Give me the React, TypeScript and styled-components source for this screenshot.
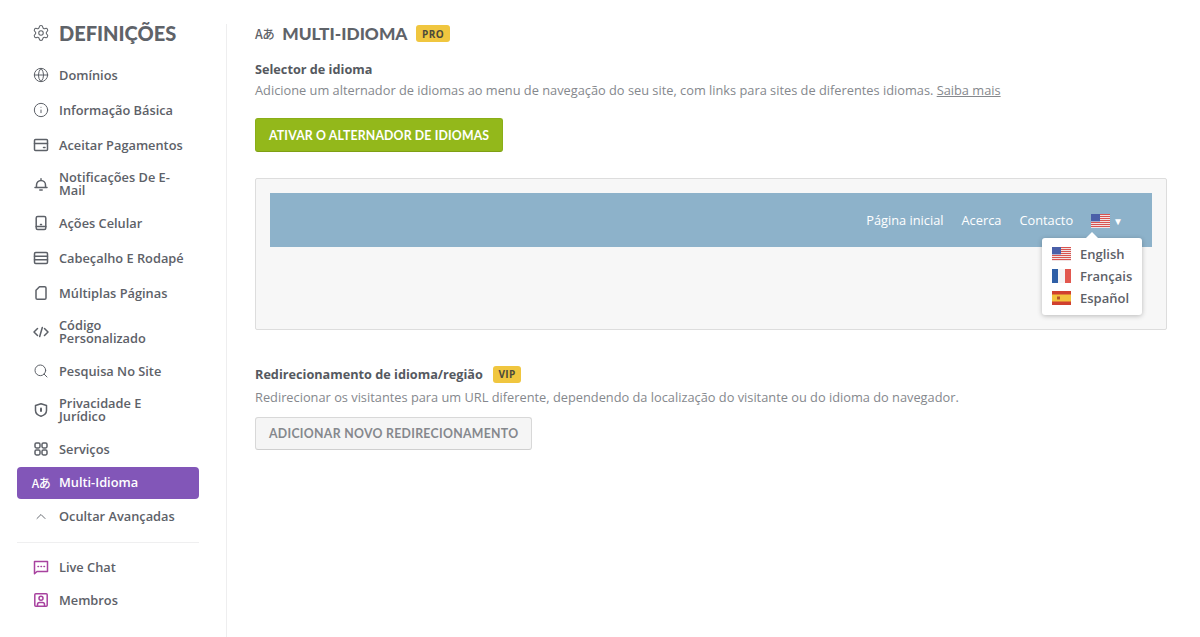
import styled, { createGlobalStyle } from 'styled-components'
import { ChevronUp, Globe, Info, Search, Settings } from 'lucide-react'
import type { ReactNode } from 'react'

const GlobalStyle = createGlobalStyle`
  html, body {
    margin: 0;
    padding: 0;
    background: #fff;
    font-family: 'Open Sans', 'Liberation Sans', sans-serif;
  }
  * {
    box-sizing: border-box;
  }
`

const Page = styled.div`
  display: flex;
  height: 637px;
  padding-top: 24px;
  overflow: hidden;
`

const Sidebar = styled.aside`
  width: 227px;
  flex: none;
  padding: 0 27px 0 17px;
  border-right: 1px solid #eeeeef;
`

const SideTitle = styled.h2`
  display: flex;
  align-items: center;
  height: 18px;
  margin: 0 0 15.5px;
  padding-left: 15px;
  font-family: Lato, sans-serif;
  font-size: 20px;
  font-weight: 900;
  color: #5f6369;
  svg {
    margin-right: 9px;
  }
`

const NavList = styled.nav`
  display: flex;
  flex-direction: column;
`

const NavItem = styled.a<{ $active?: boolean; $compact?: boolean }>`
  display: flex;
  align-items: center;
  padding: ${({ $active, $compact }) => ($active ? '7px' : $compact ? '7.5px' : '8.5px')} 12px
    ${({ $active, $compact }) => ($active ? '7px' : $compact ? '7.5px' : '8.5px')} 16px;
  border-radius: 4px;
  font-size: 12.8px;
  font-weight: 600;
  line-height: 13px;
  color: ${({ $active }) => ($active ? '#fff' : '#5d6168')};
  background: ${({ $active }) => ($active ? '#8256b8' : 'transparent')};
`

const NavIcon = styled.span<{ $tint?: string }>`
  display: flex;
  align-items: center;
  justify-content: center;
  flex: none;
  width: 16px;
  height: 18px;
  margin-right: 10px;
  color: ${({ $tint }) => $tint || 'inherit'};
`

const Divider = styled.hr`
  height: 1px;
  margin: 8px 0;
  border: none;
  background: #efeff0;
`

const LangGlyph = styled.span<{ $size: number }>`
  font-family: 'Noto Sans CJK JP', 'Open Sans', sans-serif;
  font-size: ${({ $size }) => $size}px;
  font-weight: 500;
  white-space: nowrap;
  letter-spacing: -0.5px;
`

const Main = styled.main`
  flex: 1;
  padding: 0 33px 0 28px;
`

const TitleRow = styled.div`
  display: flex;
  align-items: center;
  height: 19px;
  margin-bottom: 17px;
  color: #5f6369;
`

const MainTitle = styled.h1`
  margin: 0 9px 0 8px;
  font-family: Lato, sans-serif;
  font-size: 17.3px;
  font-weight: 900;
  color: #5f6369;
`

const Badge = styled.span`
  display: inline-flex;
  align-items: center;
  justify-content: center;
  height: 17px;
  padding: 0 5.5px;
  border-radius: 3px;
  background: #f0c63f;
  font-size: 10px;
  font-weight: 700;
  letter-spacing: 0.4px;
  color: #4c4a3a;
`

const SectionTitle = styled.div`
  display: flex;
  align-items: center;
  gap: 10px;
  font-size: 12.7px;
  font-weight: 700;
  line-height: 18px;
  color: #555960;
`

const Description = styled.p<{ $gap: number }>`
  margin: ${({ $gap }) => $gap}px 0 0;
  font-size: 12.8px;
  line-height: 18px;
  color: #85888d;
  a {
    color: #85888d;
    text-decoration: underline;
  }
`

const Button = styled.button<{ $primary?: boolean }>`
  display: block;
  height: ${({ $primary }) => ($primary ? '34px' : '33px')};
  padding: 0 13px;
  border-radius: 3px;
  border: 1px solid ${({ $primary }) => ($primary ? '#8aae18' : '#d8d8d8')};
  border-bottom-color: ${({ $primary }) => ($primary ? '#7f9f14' : '#cfcfcf')};
  background: ${({ $primary }) => ($primary ? '#93b81b' : '#f5f5f5')};
  font-family: Lato, sans-serif;
  font-size: 12.3px;
  font-weight: 700;
  letter-spacing: ${({ $primary }) => ($primary ? '0.15px' : '0.3px')};
  color: ${({ $primary }) => ($primary ? '#fff' : '#85888d')};
`

const PrimaryWrap = styled.div`
  margin-top: 19px;
`

const Preview = styled.section`
  position: relative;
  height: 152px;
  margin-top: 26px;
  padding: 14px;
  border: 1px solid #dddddd;
  border-radius: 2px;
  background: #f7f7f7;
`

const SiteBar = styled.div`
  display: flex;
  align-items: center;
  justify-content: flex-end;
  gap: 18px;
  height: 54px;
  padding-right: 29px;
  background: #8db2ca;
  font-size: 12.8px;
  color: #fff;
`

const FlagButton = styled.span`
  display: flex;
  align-items: center;
  gap: 3px;
  font-size: 10px;
  margin-top: 1px;
`

const Dropdown = styled.div`
  position: absolute;
  top: 59px;
  right: 24px;
  width: 100px;
  height: 77px;
  padding: 5px 0 0 10px;
  border-radius: 3px;
  background: #fff;
  box-shadow: 0 1px 5px rgba(0, 0, 0, 0.25);
  &::before {
    content: '';
    position: absolute;
    top: -6px;
    left: 44px;
    border-left: 6px solid transparent;
    border-right: 6px solid transparent;
    border-bottom: 6px solid #fff;
  }
`

const LangOption = styled.div`
  display: flex;
  align-items: center;
  gap: 9px;
  height: 22px;
  font-size: 13px;
  font-weight: 600;
  color: #5d6168;
`

const RedirectBlock = styled.div`
  margin-top: 35px;
`

const SecondaryWrap = styled.div`
  margin-top: 11px;
`

const Line = ({ children }: { children: ReactNode }) => (
  <svg width="16" height="16" viewBox="0 0 16 16" fill="none" stroke="currentColor" strokeWidth="1.5" strokeLinecap="round" strokeLinejoin="round">
    {children}
  </svg>
)

const UsFlag = () => (
  <svg width="19" height="14" viewBox="0 0 19 14">
    <rect width="19" height="14" fill="#f4f4f4" />
    {[0, 2, 4, 6, 8, 10, 12].map((y) => (
      <rect key={y} y={y} width="19" height="1.1" fill="#d9534f" />
    ))}
    <rect width="9" height="7.4" fill="#4a5fa8" />
  </svg>
)

const FrFlag = () => (
  <svg width="19" height="14" viewBox="0 0 19 14">
    <rect width="6" height="14" fill="#2f5fa6" />
    <rect x="6" width="7" height="14" fill="#f5f5f5" />
    <rect x="13" width="6" height="14" fill="#e2584f" />
  </svg>
)

const EsFlag = () => (
  <svg width="19" height="14" viewBox="0 0 19 14">
    <rect width="19" height="14" fill="#d0402f" />
    <rect y="3.5" width="19" height="7" fill="#f2c23e" />
    <rect x="5" y="5.5" width="3" height="3" fill="#b5552a" />
  </svg>
)

const items: { label: ReactNode; icon: ReactNode }[] = [
  { label: 'Domínios', icon: <Globe size={16} strokeWidth={1.5} /> },
  { label: 'Informação Básica', icon: <Info size={16} strokeWidth={1.5} /> },
  {
    label: 'Aceitar Pagamentos',
    icon: (
      <Line>
        <rect x="1.5" y="2.5" width="13" height="11" rx="1" />
        <path d="M1.5 6.5h13M10.5 10.5h1.5" />
      </Line>
    ),
  },
  {
    label: 'Notificações De E-Mail',
    icon: (
      <Line>
        <path d="M2 11.5h12M3.5 11.5V9a4.5 4.5 0 0 1 9 0v2.5M8 3.5V2.8M6.8 14h2.4" />
      </Line>
    ),
  },
  {
    label: 'Ações Celular',
    icon: (
      <Line>
        <rect x="3.2" y="1.5" width="9.6" height="13" rx="1.5" />
        <path d="M3.2 11.5h9.6M7.5 9.5h1" />
      </Line>
    ),
  },
  {
    label: 'Cabeçalho E Rodapé',
    icon: (
      <Line>
        <rect x="1.5" y="2.5" width="13" height="11" rx="1.2" />
        <path d="M1.5 6.3h13M1.5 9.7h13" />
      </Line>
    ),
  },
  {
    label: 'Múltiplas Páginas',
    icon: (
      <Line>
        <path d="M6.5 1.8h5.2a1.3 1.3 0 0 1 1.3 1.3v9.8a1.3 1.3 0 0 1-1.3 1.3H4.3A1.3 1.3 0 0 1 3 12.9V5.3z" />
      </Line>
    ),
  },
  {
    label: 'Código Personalizado',
    icon: (
      <Line>
        <path d="M4.5 4.5 1 8l3.5 3.5M11.5 4.5 15 8l-3.5 3.5M9.3 3.5 6.7 12.5" />
      </Line>
    ),
  },
  { label: 'Pesquisa No Site', icon: <Search size={16} strokeWidth={1.5} /> },
  {
    label: 'Privacidade E Jurídico',
    icon: (
      <Line>
        <path d="M8 1.8 13.5 3.5v5c0 2.8-2.5 4.8-5.5 5.8-3-1-5.5-3-5.5-5.8v-5z" />
        <path d="M8 6.5v2.5" strokeWidth="2" />
      </Line>
    ),
  },
  {
    label: 'Serviços',
    icon: (
      <Line>
        <rect x="2" y="2" width="5" height="5" rx="1.4" />
        <rect x="9" y="2" width="5" height="5" rx="1.4" />
        <rect x="2" y="9" width="5" height="5" rx="1.4" />
        <rect x="9" y="9" width="5" height="5" rx="1.4" />
      </Line>
    ),
  },
]

const App = () => {
  return (
    <>
      <GlobalStyle />
      <Page>
        <Sidebar>
          <SideTitle>
            <Settings size={18} strokeWidth={1.4} />
            DEFINIÇÕES
          </SideTitle>
          <NavList>
            {items.map((item, i) => (
              <NavItem key={i}>
                <NavIcon>{item.icon}</NavIcon>
                {item.label}
              </NavItem>
            ))}
            <NavItem $active>
              <NavIcon>
                <LangGlyph $size={12}>Aあ</LangGlyph>
              </NavIcon>
              Multi-Idioma
            </NavItem>
            <NavItem>
              <NavIcon>
                <ChevronUp size={19} strokeWidth={1.4} />
              </NavIcon>
              Ocultar Avançadas
            </NavItem>
          </NavList>
          <Divider />
          <NavList>
            <NavItem $compact>
              <NavIcon $tint="#a8429f">
                <Line>
                  <path d="M1.5 2.5h13v10H4l-2.5 2.2z" />
                  <path d="M5 7.5h.5M8 7.5h.5M11 7.5h.5" />
                </Line>
              </NavIcon>
              Live Chat
            </NavItem>
            <NavItem $compact>
              <NavIcon $tint="#a8429f">
                <Line>
                  <rect x="1.8" y="1.8" width="12.4" height="12.4" rx="1" />
                  <circle cx="8" cy="6.3" r="2" />
                  <path d="M4.5 14v-1.5a2 2 0 0 1 2-2h3a2 2 0 0 1 2 2V14" />
                </Line>
              </NavIcon>
              Membros
            </NavItem>
          </NavList>
        </Sidebar>
        <Main>
          <TitleRow>
            <LangGlyph $size={12.5}>Aあ</LangGlyph>
            <MainTitle>MULTI-IDIOMA</MainTitle>
            <Badge>PRO</Badge>
          </TitleRow>
          <SectionTitle>Selector de idioma</SectionTitle>
          <Description $gap={3}>
            Adicione um alternador de idiomas ao menu de navegação do seu site, com links para sites de diferentes idiomas. <a>Saiba mais</a>
          </Description>
          <PrimaryWrap>
            <Button $primary>ATIVAR O ALTERNADOR DE IDIOMAS</Button>
          </PrimaryWrap>
          <Preview>
            <SiteBar>
              <span>Página inicial</span>
              <span>Acerca</span>
              <span>Contacto</span>
              <FlagButton>
                <UsFlag />▼
              </FlagButton>
            </SiteBar>
            <Dropdown>
              <LangOption>
                <UsFlag />
                English
              </LangOption>
              <LangOption>
                <FrFlag />
                Français
              </LangOption>
              <LangOption>
                <EsFlag />
                Español
              </LangOption>
            </Dropdown>
          </Preview>
          <RedirectBlock>
            <SectionTitle>
              Redirecionamento de idioma/região
              <Badge>VIP</Badge>
            </SectionTitle>
            <Description $gap={5}>
              Redirecionar os visitantes para um URL diferente, dependendo da localização do visitante ou do idioma do navegador.
            </Description>
            <SecondaryWrap>
              <Button>ADICIONAR NOVO REDIRECIONAMENTO</Button>
            </SecondaryWrap>
          </RedirectBlock>
        </Main>
      </Page>
    </>
  )
}

export default App
